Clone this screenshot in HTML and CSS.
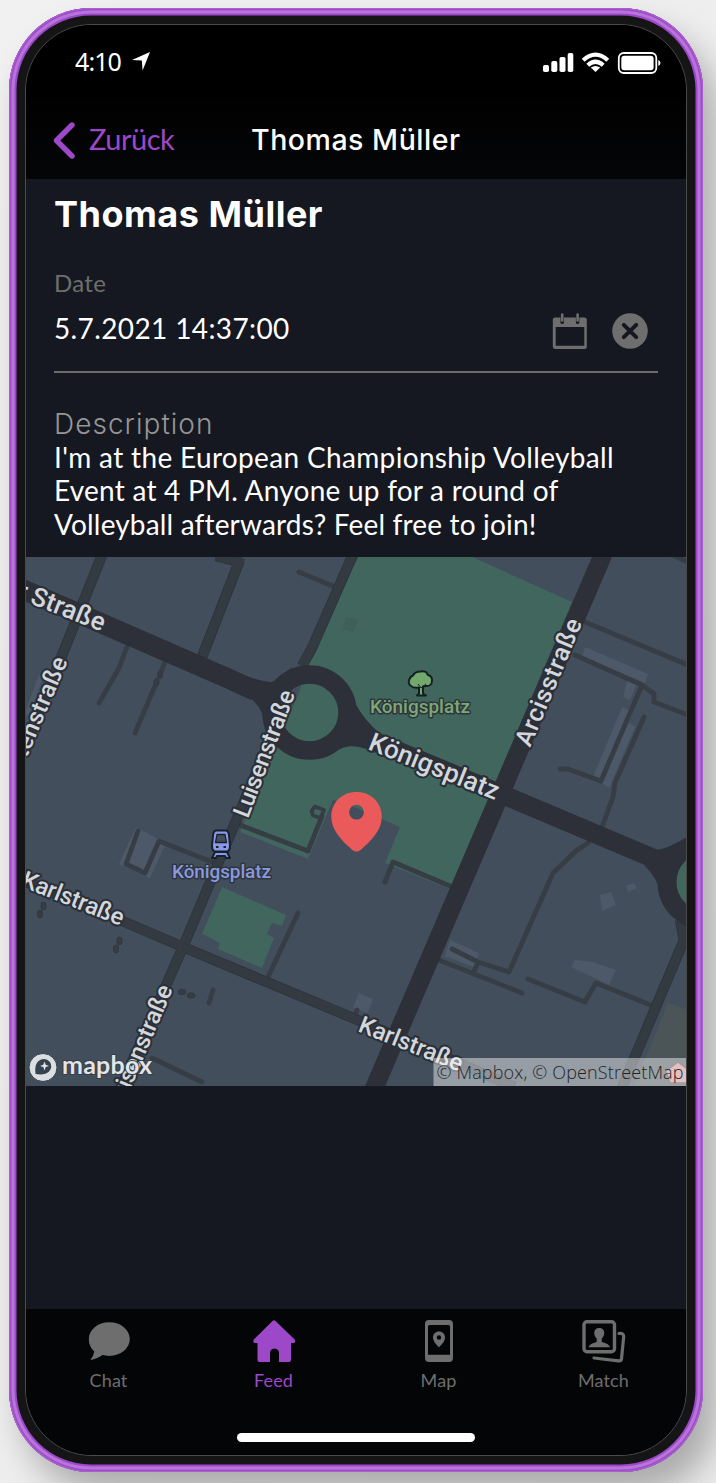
FILE: index.html
```html
<!DOCTYPE html>
<html lang="de">
<head>
<meta charset="utf-8">
<title>Thomas Müller</title>
<link rel="stylesheet" href="styles.css">
</head>
<body>
<div class="phone">
<div class="screen">
  <div class="status">
    <span class="time">4:10</span>
    <svg class="arrow" width="18" height="19" viewBox="0 0 18 19"><path d="M18 0 10.600 18.500 9.800 8.600 0 8Z" fill="#fff"/></svg>
    <svg class="signals" width="120" height="24" viewBox="541 50 120 24" fill="#fff">
      <rect x="543" y="65" width="6" height="7" rx="1.800"/><rect x="551.300" y="61" width="6" height="11" rx="1.800"/><rect x="559.500" y="57" width="6" height="15" rx="1.800"/><rect x="567.700" y="53" width="5.600" height="19" rx="1.800"/>
      <g fill="none" stroke="#fff" stroke-width="4.200"><path d="M583.200 60.300Q595.500 49 607.800 60.300"/><path d="M587.800 65.200Q595.500 58.200 603.200 65.200"/></g>
      <path d="M590.800 67.600Q595.500 64.200 600.200 67.600L595.500 72Z"/>
      <rect x="618.800" y="53" width="37.500" height="20" rx="5" fill="none" stroke="#fff" stroke-width="1.800"/><rect x="621.300" y="55.700" width="32.300" height="14.600" rx="3"/><path d="M658.300 60Q660.500 60.800 660.500 63T658.300 66Z"/>
    </svg>
  </div>
  <nav class="nav">
    <svg class="chevron" width="22" height="37" viewBox="0 0 22 37"><path d="M19 3 3.500 18.500 19 34" fill="none" stroke="#9c48c9" stroke-width="5.400" stroke-linecap="round" stroke-linejoin="round"/></svg>
    <span class="back">Zurück</span>
    <span class="heading">Thomas Müller</span>
  </nav>
  <section class="details">
    <h1 class="name">Thomas Müller</h1>
    <div class="label">Date</div>
    <div class="daterow">
      <span class="value">5.7.2021 14:37:00</span>
      <svg width="36" height="37" viewBox="552.500 313 36 37">
        <path fill="#6e6e6e" fill-rule="evenodd" d="M556 317.500h5v5q0 1.500 1.700 1.500t1.700-1.500v-5h12v5q0 1.500 1.700 1.500t1.700-1.500v-5h5q2.500 0 2.500 2.500v26.500q0 2.500-2.500 2.500h-29q-2.500 0-2.500-2.500V320q0-2.500 2.500-2.500ZM556.200 327v18.800h28.600V327Z"/>
        <path d="M562.700 314.500v6M578.100 314.500v6" stroke="#6e6e6e" stroke-width="2.600" stroke-linecap="round"/>
      </svg>
      <svg width="36" height="36" viewBox="0 0 36 36"><circle cx="18" cy="18" r="17.800" fill="#6e6e6e"/><path d="m11.800 11.800 12.400 12.400M24.200 11.800 11.800 24.200" stroke="#151820" stroke-width="4" stroke-linecap="round"/></svg>
    </div>
    <div class="desclabel">Description</div>
    <p class="desc"><span class="l1">I'm at the European Championship Volleyball</span><br><span class="l2">Event at 4 PM. Anyone up for a round of</span><br><span class="l3">Volleyball afterwards? Feel free to join!</span></p>
  </section>
  <svg class="map" width="661" height="529" viewBox="26 557 661 529">
    <rect x="20" y="550" width="680" height="540" fill="#424e5c"/>
    <!-- parks -->
    <g fill="#40665e">
      <path d="M359 556H470L572 602 450 889 385 863 400 827 345 803 333 800 308 859 240 832 300 690 310 650Z"/>
      <path d="M222 887 202 934 220 943 218 949 262 968 274 938 267 934 272 923 282 926 286 915Z"/>
      <circle cx="706" cy="882" r="31"/>
    </g>
    <path d="M346 617 358 620 353 632 343 629Z" fill="#3d6059"/>
    <path d="M668 1003 688 1010V1086H634Z" fill="#4b5558"/>
    <!-- buildings -->
    <g fill="#4d5969">
      <path d="M585 647 648 674 645 683 582 657Z"/><path d="M628 678 637 683 630 700 623 697Z"/><path d="M622 707 633 712 629 723 635 727 609 788 593 777Z"/>
      <path d="M600 895 611 892 616 905 602 911Z"/><path d="M626 886 634 883 637 888 628 892Z"/><path d="M575 960 593 962 616 970 609 985 571 967Z"/>
      <path d="M450 940 479 953 474 967 445 956Z"/><path d="M359 993 373 999 368 1013 353 1008Z"/><path d="M39 675 43 677 28 718 25 712Z"/>
      <path d="M136 827 119 864 150 878 165 845 158 839Z"/>
    </g>
    <!-- footpaths -->
    <g fill="none" stroke="#363d45" stroke-width="4.800" stroke-linecap="round" stroke-linejoin="round">
      <path d="M127 647 118 670 99 703M165 662 161 672M155 686 135 733M299 572 335 587M585 622 688 665"/>
      <path d="M575 655 642 685 654 694V702L688 715M642 685 601 781 568 769H560"/>
      <path d="M644 717 615 783 613 797 602 827M588 843 577 850 553 873 509 972 478 962 452 949M478 962 473 974M439 960 522 993"/>
      <path d="M528 979 585 1002 596 983 653 1006M138 831 126 864 145 873 159 841 217 864"/>
      <path d="M213 990 209 1003M152 1058 202 1082M298 913 268 977M357 1010 355 1016M385 882 393 862 450 886"/>
      <path d="M240 825 308 851 322 816M668 553 688 562"/>
      <path d="M315 806.500 324 810 320.500 818 313 815.500 311.500 811Z" stroke-width="3.800"/>
    </g>
    <g fill="#363d45" stroke="#303740" stroke-width="1">
      <ellipse cx="160" cy="675" rx="2.600" ry="3.600"/><ellipse cx="156.500" cy="682" rx="2.600" ry="3.600"/>
      <ellipse cx="43.500" cy="906" rx="2.600" ry="4"/><ellipse cx="40" cy="914" rx="2.600" ry="4"/>
      <ellipse cx="119.500" cy="941" rx="2.600" ry="4"/><ellipse cx="116" cy="949" rx="2.600" ry="4"/>
      <ellipse cx="182" cy="992" rx="4" ry="2.600"/><ellipse cx="191" cy="995.500" rx="4" ry="2.600"/>
    </g>
    <!-- side streets -->
    <g fill="none" stroke="#2b3239" stroke-width="10.500" stroke-linejoin="round">
      <path id="side" d="M104 550 63 653 25 745M216 556 239 562 202 657M355 550 312 648 302 666M270 740 238 816 183 947 118 1094M20 879 127 923 183 947 353 1018 515 1087M680 920 684 940 631 1066 621 1090"/>
    </g>
    <use href="#side" class="sidefill"/>
    <!-- main roads -->
    <g fill="none" stroke="#2d3038">
      <path d="M15 586 103 624 225 677 255 691" stroke-width="20"/>
      <path d="M355 733 513 799 655 859" stroke-width="19"/>
      <path d="M605 550 493.500 810 373 1091" stroke-width="18.500"/>
      <circle cx="309.500" cy="712.500" r="38" stroke-width="18.500"/>
      <circle cx="706" cy="882" r="39" stroke-width="19"/>
    </g>
    <g fill="#2d3038">
      <path d="M229 668Q257 682 272 682 283 679 292 667L284 700 273 730H265Q265 709 250 698L221 685Z"/>
      <path d="M350 690Q357 715 385 738L375 753Q353 741 338 750L320 757 348 714Z"/>
      <path d="M648 848Q657 853 674 844L688 837 686 853 676 872 660 892Q657 878 645 866Z"/>
    </g>
    <!-- street names -->
    <g class="street">
      <text class="wide" transform="translate(29 603) rotate(21.500)" textLength="78">Straße</text>
      <text class="wide" transform="translate(15 597) rotate(22)">r</text>
      <text transform="translate(68 661) rotate(-67)" text-anchor="end" textLength="106">tenstraße</text>
      <text transform="translate(248 819) rotate(-69.300)" textLength="134">Luisenstraße</text>
      <text class="tall" transform="translate(530 748) rotate(-67.300)" textLength="136">Arcisstraße</text>
      <text class="wide" transform="translate(367 749) rotate(21.700)" textLength="138">Königsplatz</text>
      <text transform="translate(20 886) rotate(21.700)" textLength="108">Karlstraße</text>
      <text transform="translate(357 1031) rotate(21.700)" textLength="110">Karlstraße</text>
      <text transform="translate(173 989) rotate(-67)" text-anchor="end" textLength="134">Luisenstraße</text>
    </g>
    <!-- points of interest -->
    <g class="poi">
      <text x="370" y="713" textLength="100" fill="#7da876">Königsplatz</text>
      <text x="172" y="878" textLength="99" fill="#8b98dd">Königsplatz</text>
    </g>
    <path d="M420.500 671.500q6-1 7 3 5 2 4.500 6 0 6-6 5.500l-3 .5v7l3 2h-9l2-2v-6q-6 1-8-1.500-3-2-2-5.500 1-4 4-5 2-4 7.500-4Z" fill="#72a86c" stroke="#152025" stroke-width="2" stroke-linejoin="round"/>
    <path d="M418 684 421 688 426 684" fill="none" stroke="#152025"/>
    <g stroke="#17202b" stroke-width="2" stroke-linejoin="round" fill="#8b98e6">
      <path d="m215 852-3 6h4l1-2h8l1 2h4l-3-6Z"/><path d="M216.500 830.500h9q3 0 3.500 5l1 10q0 6-3.500 6h-11q-3.500 0-3.500-6l1-10q.500-5 3.500-5Z"/><path d="M217 834.500h8l1.500 8h-11Z" fill="#424e5c" stroke-width="1.300"/>
    </g>
    <path d="M216 846h2.500v2H216ZM223.500 846h2.500v2h-2.500Z" fill="#17202b"/>
    <path d="M356.500 792C342 792 331.300 802.500 331.300 817 331.300 830 342 841 352.500 850Q356.500 853 360.500 850C371 841 381.800 830 381.800 817 381.800 802.500 371 792 356.500 792ZM356.500 804.800a7.400 7.400 0 1 1 0 14.800 7.400 7.400 0 1 1 0-14.800Z" fill="#ea5a5b" fill-rule="evenodd"/>
    <!-- logo and attribution -->
    <circle cx="43" cy="1067.500" r="14" fill="#dcdfe2" stroke="#343e49" stroke-width="1"/>
    <path d="M35.500 1074Q34 1063 40 1060 46 1057.500 50 1062 53 1067 49 1071.500 45 1075.500 35.500 1074Z" fill="#36424f"/><path d="m44.500 1061.500 1.200 3.200 3.300 1.200-3.300 1.200-1.200 3.300-1.200-3.300-3.300-1.200 3.300-1.200Z" fill="#e2e5e8"/>
    <text class="logo" x="62" y="1074" textLength="90">mapbox</text>
    <g fill="#c98f8f" stroke="#59464b" stroke-width="1.500"><path d="M666 1071 678 1062 690 1071 687 1083H670Z"/></g>
    <rect x="433.500" y="1058" width="254" height="28" fill="#fff" fill-opacity=".45"/>
    <text class="attribution" x="436.500" y="1079" textLength="247">© Mapbox, © OpenStreetMap</text>
  </svg>
  <div class="spacer"></div>
  <footer class="tabs">
    <div class="tab"><svg width="44" height="44" viewBox="86 1319 44 44"><path d="M108.300 1322.300c11.500 0 20.500 7.500 20.500 16.800s-9 16.800-20.500 16.800q-4 0-7-.8-4.500 3.500-12 5 3.500-4.500 4-8.500-5.500-5-5.500-12.500c0-9.300 9-16.800 20.500-16.800Z" fill="#6e6e6e"/></svg><span>Chat</span></div>
    <div class="tab active"><svg width="44" height="44" viewBox="252 1319 44 44"><path d="M272.500 1321q1.500-1.500 3 0l19.200 18.500q1.500 3.500-1.500 3.500h-2.200v17q0 2-2 2h-10v-9q0-4-4.500-4.500-4.500.5-4.500 4.500v9h-10.500q-2 0-2-2v-17h-2.200q-3 0-1.500-3.500Z" fill="#9c48c9"/></svg><span>Feed</span></div>
    <div class="tab"><svg width="44" height="44" viewBox="416 1319 44 44"><path fill="#6e6e6e" fill-rule="evenodd" d="M428 1320h20q4 0 4 4v34q0 4-4 4h-20q-4 0-4-4v-34q0-4 4-4ZM428.500 1325q-1.500 0-1.500 1.500v28.300h22v-28.300q0-1.500-1.500-1.500ZM438 1331.500c3.500 0 6 2.500 6 6 0 4-3.500 7-6 10-2.500-3-6-6-6-10 0-3.500 2.500-6 6-6ZM438 1335.300a2.200 2.200 0 1 0 0 4.400 2.200 2.200 0 1 0 0-4.400Z"/></svg><span>Map</span></div>
    <div class="tab"><svg width="44" height="44" viewBox="582 1319 44 44"><rect x="584" y="1321.700" width="30.500" height="30" rx="3" fill="none" stroke="#6e6e6e" stroke-width="3.400"/><path d="M599.300 1328c6.500 0 5.800 8 2.500 10.500v3.500q7 1.500 8.200 5.200h-21.500q1.300-3.700 8.200-5.200v-3.500c-3.300-2.500-4-10.500 2.600-10.500Z" fill="#6e6e6e"/><path d="M619 1333.500q5-.5 4.700 3L621.500 1359q-.5 2-3 1.800L594 1358" fill="none" stroke="#6e6e6e" stroke-width="3.200" stroke-linecap="round"/></svg><span>Match</span></div>
  </footer>
  <div class="homearea"><div class="home"></div></div>
</div>
</div>
</body>
</html>
```
FILE: styles.css
```css
* { box-sizing: border-box; }
body { margin: 0; height: 1483px; overflow: hidden; background: linear-gradient(115deg, #f1f1f1, #ebebeb); }
.phone {
  width: 694px; height: 1464px; margin: 8px 0 0 9px; padding: 16px; border-radius: 82px; background: #151515;
  box-shadow: inset 0 0 0 1px #a862cd, inset 0 0 0 2.500px #a04bcb, inset 0 0 0 5.500px #b874da, inset 0 0 0 7.500px #9c48c9, 14px 22px 34px rgba(0,0,0,.28);
}
.screen {
  height: 1432px; overflow: hidden; display: flex; flex-direction: column;
  border: 1px solid #4b4b4b; border-radius: 67px; background: #151820; font-family: Lato, sans-serif;
}
.status { height: 74px; flex: none; display: flex; align-items: center; padding: 0 25px 0 49px; color: #fff; background: #000; }
.time { font: 25px/30px "Noto Sans", sans-serif; letter-spacing: -.9px; width: 57px; margin-top: -2px; }
.arrow { margin-bottom: 1px; }
.signals { margin-left: auto; }
.nav { height: 80px; flex: none; display: grid; grid-template-columns: 36px 162px 1fr; align-items: center; padding: 2px 0 0 27px; background: linear-gradient(#010101, #040507); }
.back { margin-top: -4px; font-size: 29px; color: #9c48c9; letter-spacing: -.5px; }
.heading { font: 500 28.500px/36px Inter, sans-serif; letter-spacing: .53px; color: #fff; }
.details { height: 377.500px; flex: none; padding: 13px 28px 0; color: #fff; }
.name { margin: 0; font: 700 36px/44px Inter, sans-serif; letter-spacing: .5px; }
.label { margin-top: 32px; font-size: 24px; line-height: 30px; letter-spacing: .3px; color: #6e6e6e; }
.daterow { height: 75px; display: flex; gap: 24px; padding: 15px 10px 0 0; border-bottom: 2px solid #6b6b69; }
.value { flex: 1; font-size: 28px; line-height: 30px; letter-spacing: .38px; }
.desclabel { margin-top: 33px; font: 300 28px/36px Inter, sans-serif; letter-spacing: 1.030px; color: #969696; }
.desc { margin: -1.500px 0 0; font-size: 28px; line-height: 33.500px; white-space: nowrap; }
.l1 { letter-spacing: .34px; }
.l2 { letter-spacing: .24px; }
.l3 { letter-spacing: .17px; }
.map { display: block; flex: none; }
.sidefill { fill: none; stroke: #343a42; stroke-width: 9px; }
.street { font: 500 24px Roboto, sans-serif; fill: #d3d6da; stroke: #2a2f38; stroke-width: 4px; paint-order: stroke; stroke-linejoin: round; }
.wide { font-size: 26px; }
.tall { font-size: 25px; }
.poi { font: 500 19px Roboto, sans-serif; stroke: #2d363d; stroke-width: 3px; paint-order: stroke; stroke-linejoin: round; }
.logo { font: 700 25px Lato, sans-serif; fill: #e2e4e6; stroke: #343e49; stroke-width: 2px; paint-order: stroke; }
.attribution { font: 300 18px "Open Sans", sans-serif; fill: #202327; }
.spacer { flex: 1; }
.tabs { height: 93px; flex: none; display: flex; background: #040507; }
.tab { flex: 1; display: flex; flex-direction: column; align-items: center; padding-top: 10px; color: #6e6e6e; font-size: 18px; line-height: 24px; letter-spacing: .1px; }
.tab span { margin-top: 5px; }
.active { color: #9c48c9; }
.homearea { height: 53px; flex: none; padding-top: 31px; background: #040507; }
.home { width: 238px; height: 9px; margin: 0 auto; border-radius: 5px; background: #fff; }
```
